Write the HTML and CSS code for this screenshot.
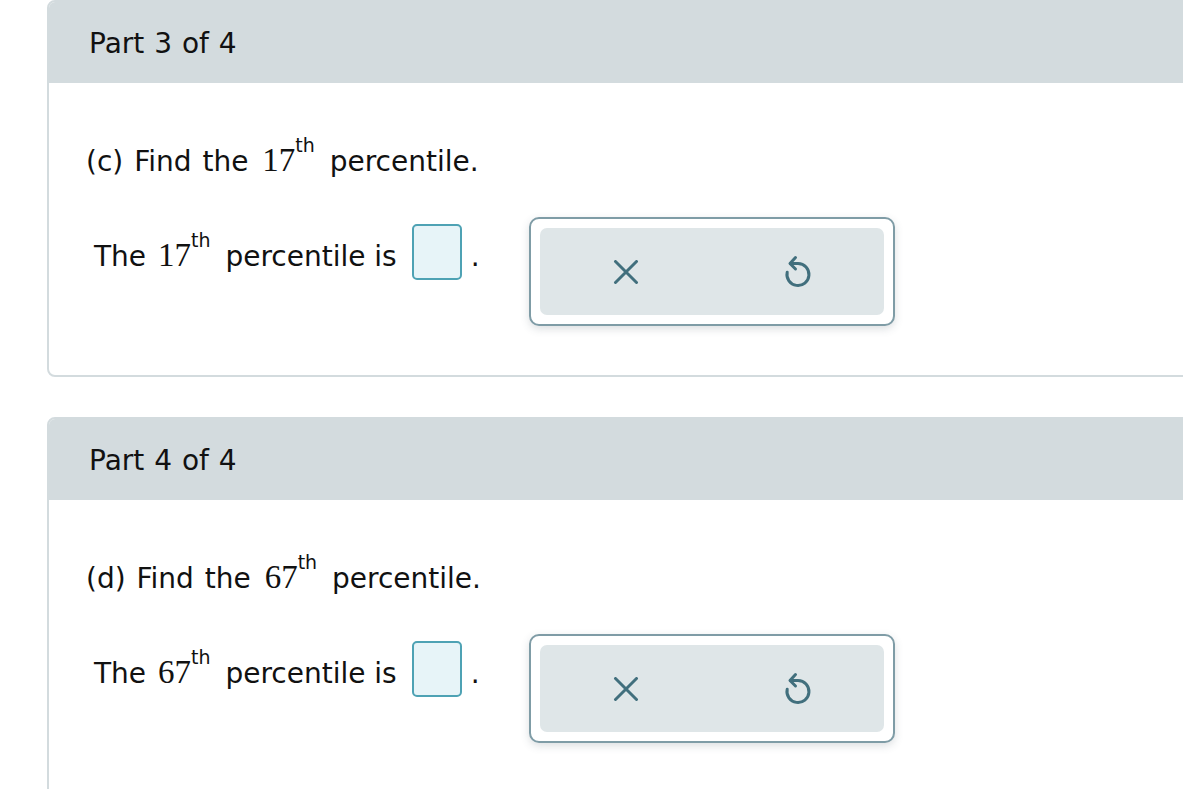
FILE: index.html
```html
<!DOCTYPE html>
<html lang="en">
<head>
<meta charset="utf-8">
<title>Percentiles</title>
<link rel="stylesheet" href="styles.css">
</head>
<body>
<div class="page">
  <section class="card">
    <header class="card-head">Part 3 of 4</header>
    <div class="card-body">
      <p class="question">(c) Find the <span class="math">17</span><sup class="ord">th</sup> percentile.</p>
      <div class="answer-row">
        <div class="answer">
          <span class="answer-text">The <span class="math">17</span><sup class="ord">th</sup> percentile is</span>
          <span class="input-box"></span>
          <span class="dot">.</span>
        </div>
        <div class="tools">
          <div class="tools-inner">
            <button class="tool" aria-label="Clear">
              <svg width="26" height="24" viewBox="0 0 26 24"><path d="M2.5 1.5 L23.5 22.5 M23.5 1.5 L2.5 22.5" fill="none" stroke="#416f7d" stroke-width="3" stroke-linecap="round"/></svg>
            </button>
            <button class="tool" aria-label="Undo">
              <svg width="28" height="33" viewBox="0 0 28 33"><path d="M6.5 8.5 H14 A11 11 0 1 1 3.2 17.2" fill="none" stroke="#416f7d" stroke-width="3" stroke-linecap="round"/><path d="M11.5 2.5 L6 8.5 L11.5 14" fill="none" stroke="#416f7d" stroke-width="3" stroke-linecap="round" stroke-linejoin="round"/></svg>
            </button>
          </div>
        </div>
      </div>
    </div>
  </section>

  <section class="card card-last">
    <header class="card-head">Part 4 of 4</header>
    <div class="card-body">
      <p class="question">(d) Find the <span class="math">67</span><sup class="ord">th</sup> percentile.</p>
      <div class="answer-row">
        <div class="answer">
          <span class="answer-text">The <span class="math">67</span><sup class="ord">th</sup> percentile is</span>
          <span class="input-box"></span>
          <span class="dot">.</span>
        </div>
        <div class="tools">
          <div class="tools-inner">
            <button class="tool" aria-label="Clear">
              <svg width="26" height="24" viewBox="0 0 26 24"><path d="M2.5 1.5 L23.5 22.5 M23.5 1.5 L2.5 22.5" fill="none" stroke="#416f7d" stroke-width="3" stroke-linecap="round"/></svg>
            </button>
            <button class="tool" aria-label="Undo">
              <svg width="28" height="33" viewBox="0 0 28 33"><path d="M6.5 8.5 H14 A11 11 0 1 1 3.2 17.2" fill="none" stroke="#416f7d" stroke-width="3" stroke-linecap="round"/><path d="M11.5 2.5 L6 8.5 L11.5 14" fill="none" stroke="#416f7d" stroke-width="3" stroke-linecap="round" stroke-linejoin="round"/></svg>
            </button>
          </div>
        </div>
      </div>
    </div>
  </section>
</div>
</body>
</html>
```

FILE: styles.css
```css
html, body {
  margin: 0;
  padding: 0;
  background: #ffffff;
  overflow: hidden;
}

body {
  font-family: "DejaVu Sans", Verdana, sans-serif;
  color: #111111;
  font-size: 28px;
}

.page {
  padding-left: 47px;
  margin-right: -40px;
}

.card {
  border: 2px solid #d3dbde;
  border-radius: 8px;
  margin-bottom: 40px;
}

.card-head {
  background: #d3dbde;
  display: flex;
  align-items: center;
  padding-left: 40px;
  padding-top: 2px;
  box-sizing: border-box;
  height: 81px;
  word-spacing: 1px;
  border-radius: 6px 0 0 0;
}

.card-body {
  padding: 59px 0 49px 37px;
}

.card-last .card-body {
  padding-bottom: 200px;
}

.question {
  margin: 0;
  line-height: 36px;
  height: 36px;
  word-spacing: 2px;
}

.math {
  font-family: "Liberation Serif", "Times New Roman", serif;
  font-size: 33px;
  margin-left: 3px;
  word-spacing: 0;
}

.ord {
  font-size: 19px;
  line-height: 0;
  vertical-align: 19px;
  margin-right: 4px;
  word-spacing: 0;
}

.answer-text .ord {
  margin-right: 6px;
}

.answer-row {
  display: flex;
  align-items: flex-start;
  margin-top: 39px;
  padding-left: 8px;
}

.answer {
  display: flex;
  align-items: center;
  margin-top: 7px;
}

.answer-text {
  white-space: pre;
  line-height: 36px;
  padding-top: 8px;
}

.input-box {
  width: 46px;
  height: 52px;
  border: 2px solid #4ea2b4;
  border-radius: 5px;
  background: #e7f4f8;
  margin-left: 15px;
}

.dot {
  margin-left: 9px;
  line-height: 36px;
  padding-top: 10px;
}

.tools {
  margin-left: 49px;
  width: 344px;
  padding: 9px;
  border: 2px solid #7f9ca6;
  border-radius: 10px;
  background: #ffffff;
  box-shadow: 0 3px 8px rgba(60, 80, 90, 0.18);
}

.tools-inner {
  display: grid;
  grid-template-columns: 1fr 1fr;
  height: 87px;
  background: #dfe6e8;
  border-radius: 7px;
}

.tool {
  border: 0;
  background: transparent;
  padding: 0;
  display: flex;
  align-items: center;
  justify-content: center;
  cursor: pointer;
}
```
